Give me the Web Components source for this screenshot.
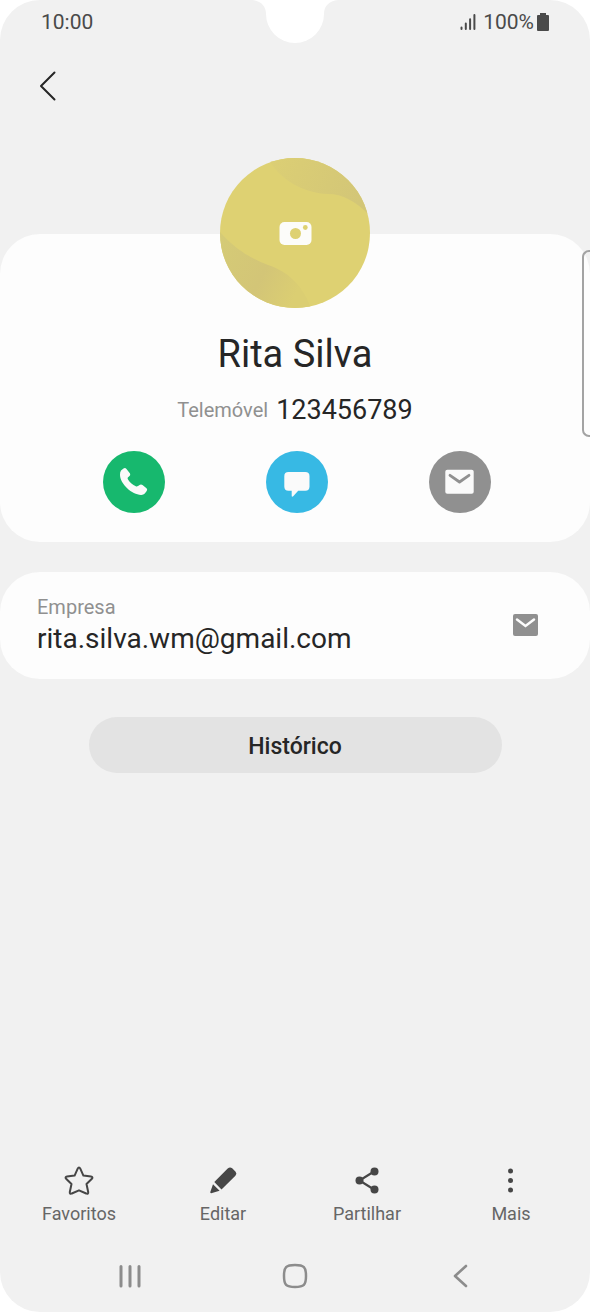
<!DOCTYPE html>
<html lang="pt">
<head>
<meta charset="utf-8">
<meta name="viewport" content="width=device-width, initial-scale=1">
<title>Rita Silva</title>
<style>
  body { margin: 0; background: #fff; font-family: Roboto, "Liberation Sans", sans-serif; color: #262626; }
</style>
</head>
<body>
<phone-shell>
  <status-bar slot="status" time="10:00" battery="100%"></status-bar>
  <back-header></back-header>
  <profile-card name="Rita Silva" label="Telemóvel" number="123456789"></profile-card>
  <contact-row label="Empresa">rita.silva.wm@gmail.com</contact-row>
  <pill-button>Histórico</pill-button>
  <tab-bar slot="footer">
    <tab-item icon="star">Favoritos</tab-item>
    <tab-item icon="pencil">Editar</tab-item>
    <tab-item icon="share">Partilhar</tab-item>
    <tab-item icon="dots">Mais</tab-item>
  </tab-bar>
  <system-nav slot="footer"></system-nav>
</phone-shell>

<script>
const RESET = `
  *, *::before, *::after { box-sizing: border-box; }
  button { appearance: none; border: 0; margin: 0; padding: 0; background: none; font: inherit; color: inherit; cursor: pointer; }
  svg { display: block; }
  p, h1 { margin: 0; font-weight: 400; }
`;

function define(name, render) {
  customElements.define(name, class extends HTMLElement {
    connectedCallback() {
      if (this.shadowRoot) return;
      const t = document.createElement('template');
      t.innerHTML = render(this);
      this.attachShadow({ mode: 'open' }).append(t.content.cloneNode(true));
    }
  });
}

define('phone-shell', () => `
  <style>${RESET}
    :host { display: flex; flex-direction: column; position: relative; min-height: 100vh; background: #f1f1f1; border-radius: 40px; overflow: hidden; box-sizing: border-box; }
    .notch { position: absolute; top: 0; left: 50%; margin-left: -43px; }
    main { flex: 1; }
  </style>
  <svg class="notch" width="86" height="43" viewBox="0 0 86 43" aria-hidden="true">
    <path d="M0 0C9 1 14 6 14 14A29 29 0 0 0 72 14C72 6 77 1 86 0Z" fill="#fff"/>
  </svg>
  <slot name="status"></slot>
  <main><slot></slot></main>
  <slot name="footer"></slot>
`);

define('status-bar', el => `
  <style>${RESET}
    :host { display: flex; align-items: center; justify-content: space-between; height: 44px; padding: 0 41px; font-size: 21px; color: #4a4a4a; }
    .right { display: flex; align-items: center; gap: 3px; }
    .signal { margin-right: 4px; }
  </style>
  <span>${el.getAttribute('time')}</span>
  <span class="right">
    <svg class="signal" width="16" height="18" viewBox="0 0 16 18" fill="none" stroke="#4a4a4a" stroke-width="2" stroke-linecap="round" aria-hidden="true">
      <path d="M1.5 14.5V16M5.8 10.5V16M10.1 6.2V16M14.4 2V16"/>
    </svg>
    <span>${el.getAttribute('battery')}</span>
    <svg width="12" height="18" viewBox="0 0 12 18" aria-hidden="true">
      <path d="M3 0H9V2H11Q12 2 12 3V17Q12 18 11 18H1Q0 18 0 17V3Q0 2 1 2H3Z" fill="#4a4a4a"/>
    </svg>
  </span>
`);

define('back-header', () => `
  <style>${RESET}
    :host { display: flex; align-items: center; height: 84px; padding: 0 24px; }
    button { width: 48px; height: 48px; display: grid; place-items: center; }
  </style>
  <button type="button" aria-label="Voltar">
    <svg width="18" height="30" viewBox="0 0 18 30" fill="none" stroke="#262626" stroke-width="2" stroke-linecap="round" stroke-linejoin="round">
      <path d="M15.5 1.5L2 15L15.5 28.5"/>
    </svg>
  </button>
`);

define('avatar-photo', () => `
  <style>${RESET}
    :host { display: block; width: 150px; height: 150px; }
    button { display: block; width: 100%; height: 100%; border-radius: 50%; overflow: hidden; }
  </style>
  <button type="button" aria-label="Alterar fotografia">
    <svg width="100%" height="100%" viewBox="0 0 150 150">
      <defs>
        <linearGradient id="top" x1="0" y1="0" x2="1" y2="0.2">
          <stop offset="0" stop-color="#dccf74"/><stop offset="1" stop-color="#d3c677"/>
        </linearGradient>
        <linearGradient id="low" x1="0" y1="0" x2="1" y2="0.4">
          <stop offset="0" stop-color="#d5cb76"/><stop offset="0.6" stop-color="#d3c577"/><stop offset="1" stop-color="#dbce72"/>
        </linearGradient>
      </defs>
      <rect width="150" height="150" fill="#ded172"/>
      <path d="M48 0C58 20 82 35 108 36C122 36 136 43 150 58V0Z" fill="url(#top)"/>
      <path d="M0 74C14 90 28 99 48 107C68 114 82 126 91 150H0Z" fill="url(#low)"/>
      <rect x="59.5" y="64" width="32" height="23" rx="5" fill="#fcfcfa"/>
      <circle cx="75.5" cy="75.5" r="5.5" fill="#ded172"/>
      <circle cx="85.3" cy="69.5" r="2.4" fill="#ded172"/>
    </svg>
  </button>
`);

const ACTIONS = {
  call: `<path d="M18 19.5L20.5 17.5Q22.2 16.5 23.5 18L27 22.5Q27.700 24 26.5 25L24.800 26.4Q24.3 27.3 25 28.4C27 31.5 29.6 33.7 32.800 35.2Q34 35.7 35 34.9L37 33.7Q38.3 33 39.5 34L43.5 37.2Q44.8 38.5 43.7 39.9L41.8 42.5Q40.5 44 38 43.9C29 43.7 17.3 33 17 24Q16.9 21 18 19.5Z"/>`,
  chat: `<path d="M22.5 21H39.3Q43.5 21 43.5 25.2V35.5Q43.5 39.7 39.3 39.7H32.2L27.2 45.3Q25.7 46.5 25.7 44.8V39.7H22.5Q18.3 39.7 18.3 35.5V25.2Q18.3 21 22.5 21Z"/>`,
  mail: `<rect x="16.3" y="18.7" width="28.4" height="24" rx="2"/><path d="M21 24.3L30.5 31L40 24.3" fill="none" stroke="#909090" stroke-width="2.8" stroke-linecap="round" stroke-linejoin="round"/>`
};

define('round-action', el => `
  <style>${RESET}
    :host { display: block; }
    button { display: block; width: 62px; height: 62px; border-radius: 50%; background: var(--fill); }
  </style>
  <button type="button" aria-label="${el.getAttribute('label')}">
    <svg width="62" height="62" viewBox="0 0 62 62" fill="#fafafa">${ACTIONS[el.getAttribute('kind')]}</svg>
  </button>
`);

define('profile-card', el => `
  <style>${RESET}
    :host { display: flex; flex-direction: column; align-items: center; position: relative; margin-top: 106px; padding-bottom: 29px; background: #fdfdfd; border-radius: 40px; }
    avatar-photo { margin-top: -76px; }
    h1 { margin-top: 22px; font-size: 38px; line-height: 48px; }
    .phone { display: flex; align-items: center; gap: 8px; margin-top: 16px; line-height: 32px; font-size: 27px; }
    .label { font-size: 20px; color: #909090; }
    .actions { display: grid; grid-template-columns: repeat(3, 1fr); justify-items: center; align-self: stretch; margin-top: 25px; padding: 0 48px 0 52px; }
    .edge { position: absolute; right: 0; top: 16px; width: 8px; height: 187px; border: 2px solid #a3a3a3; border-right: 0; border-radius: 7px 0 0 7px; }
  </style>
  <avatar-photo></avatar-photo>
  <h1>${el.getAttribute('name')}</h1>
  <p class="phone"><span class="label">${el.getAttribute('label')}</span><span>${el.getAttribute('number')}</span></p>
  <div class="actions">
    <round-action kind="call" label="Ligar" style="--fill:#17b86e"></round-action>
    <round-action kind="chat" label="Mensagem" style="--fill:#37b9e4"></round-action>
    <round-action kind="mail" label="E-mail" style="--fill:#909090"></round-action>
  </div>
  <span class="edge"></span>
`);

define('contact-row', el => `
  <style>${RESET}
    :host { display: flex; align-items: center; justify-content: space-between; margin-top: 30px; padding: 22px 45px 21px 37px; background: #fdfdfd; border-radius: 40px; }
    .label { font-size: 20px; line-height: 26px; color: #909090; }
    .value { font-size: 28px; line-height: 38px; }
    button { width: 40px; height: 40px; display: grid; place-items: center; }
  </style>
  <div>
    <p class="label">${el.getAttribute('label')}</p>
    <p class="value"><slot></slot></p>
  </div>
  <button type="button" aria-label="Enviar e-mail">
    <svg width="25" height="24" viewBox="0 0 25 24">
      <rect width="25" height="22" rx="2" fill="#909090"/>
      <path d="M4 5.5L12.5 12L21 5.5" fill="none" stroke="#fdfdfd" stroke-width="2.5" stroke-linecap="round"/>
    </svg>
  </button>
`);

define('pill-button', () => `
  <style>${RESET}
    :host { display: flex; justify-content: center; margin-top: 38px; }
    button { width: 70%; height: 56px; padding-top: 2px; border-radius: 28px; background: #e3e3e3; font-size: 23px; font-weight: 500; }
  </style>
  <button type="button"><slot></slot></button>
`);

const TAB_ICONS = {
  star: `<path d="M16 2.5C16.7 2.5 17 3 17.3 3.6L20.4 10.6L28 11.5C29.5 11.7 29.9 12.8 28.9 13.7L23.5 19L25.2 27C25.5 28.5 24.5 29.3 23.2 28.5L16 25.3L8.8 28.5C7.5 29.3 6.5 28.5 6.8 27L8.5 19L3.1 13.7C2.1 12.8 2.5 11.7 4 11.5L11.6 10.6L14.7 3.6C15 3 15.3 2.5 16 2.5Z" fill="none" stroke="#464646" stroke-width="2" stroke-linejoin="round"/>`,
  pencil: `<path d="M7.3 17L20.7 3.500Q23 1.4 25.2 3.3L28.6 6.8Q30.3 8.8 28.4 10.7L14.5 24.6ZM6 19.2L12.6 25.7L4.2 28.2Q3 28.3 3.3 27.1Z" fill="#464646"/>`,
  share: `<path d="M23 6.5L8.5 15.5L23 24.5" fill="none" stroke="#464646" stroke-width="2.2"/><g fill="#464646"><circle cx="23.5" cy="6.5" r="4"/><circle cx="8.5" cy="15.5" r="4"/><circle cx="23.5" cy="24.5" r="4"/></g>`,
  dots: `<g fill="#464646"><circle cx="15.5" cy="6" r="2.5"/><circle cx="15.5" cy="15.5" r="2.5"/><circle cx="15.5" cy="25" r="2.5"/></g>`
};

define('tab-item', el => `
  <style>${RESET}
    :host { display: grid; }
    button { display: flex; flex-direction: column; align-items: center; gap: 5px; font-size: 18px; line-height: 24px; color: #666; }
  </style>
  <button type="button">
    <svg width="32" height="32" viewBox="0 0 32 32" aria-hidden="true">${TAB_ICONS[el.getAttribute('icon')]}</svg>
    <span><slot></slot></span>
  </button>
`);

define('tab-bar', () => `
  <style>${RESET}
    :host { display: grid; grid-template-columns: repeat(4, 1fr); padding: 0 7px; margin-bottom: 18px; }
  </style>
  <slot></slot>
`);

define('system-nav', () => `
  <style>${RESET}
    :host { display: grid; grid-template-columns: repeat(3, 1fr); justify-items: center; padding: 0 48px 4px; }
    button { width: 64px; height: 64px; display: grid; place-items: center; }
    svg { fill: none; stroke: #8c8c8c; stroke-width: 3; stroke-linecap: round; stroke-linejoin: round; }
  </style>
  <button type="button" aria-label="Recentes"><svg width="26" height="26" viewBox="0 0 26 26"><path d="M4 3.5V23M13 3.5V23M22 3.5V23"/></svg></button>
  <button type="button" aria-label="Início"><svg width="26" height="26" viewBox="0 0 26 26"><path d="M13 2C22 2 24 4 24 13S22 24 13 24S2 22 2 13S4 2 13 2Z" stroke-width="2.5"/></svg></button>
  <button type="button" aria-label="Anterior"><svg width="26" height="26" viewBox="0 0 26 26"><path d="M19 3L8 13L19 23" stroke-width="2.6"/></svg></button>
`);
</script>
</body>
</html>
